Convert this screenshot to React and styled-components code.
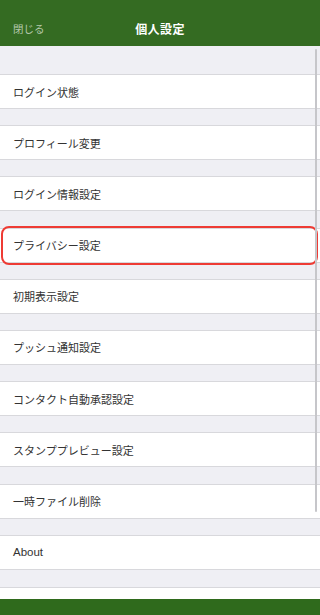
import React from 'react';
import styled, { createGlobalStyle } from 'styled-components';

const GlobalStyle = createGlobalStyle`
  html, body {
    margin: 0;
    padding: 0;
    background: #efeff4;
  }
  body {
    font-family: "Noto Sans CJK JP", "Noto Sans", sans-serif;
  }
`;

const Screen = styled.div`
  position: relative;
  width: 100%;
  height: 615px;
  display: flex;
  flex-direction: column;
  background: #efeff4;
  overflow: hidden;
`;

const Header = styled.div`
  height: 46px;
  flex-shrink: 0;
  background: #346b22;
  display: grid;
  grid-template-columns: 60px 1fr 60px;
  align-items: center;
  padding-top: 10px;
  box-sizing: border-box;
`;

const CloseLink = styled.span`
  padding-left: 13px;
  font-size: 10.5px;
  color: #b4c8ac;
`;

const Title = styled.h1`
  margin: 0;
  text-align: center;
  font-size: 12px;
  font-weight: 700;
  color: #ffffff;
  letter-spacing: 0.4px;
`;

const List = styled.div`
  flex: 1;
  display: flex;
  flex-direction: column;
  padding-top: 28px;
  gap: 16.2px;
`;

const Row = styled.div`
  position: relative;
  height: 35px;
  box-sizing: border-box;
  display: flex;
  align-items: center;
  padding-left: 13px;
  background: #ffffff;
  border-top: 1px solid #d8d8dc;
  border-bottom: 1px solid #d8d8dc;
  font-size: ${p => (p.$latin ? '11.5px' : '11px')};
  color: #333333;
  font-family: ${p => (p.$latin ? '"Liberation Sans", Arial, sans-serif' : 'inherit')};
`;

const Highlight = styled.div`
  position: absolute;
  left: 1px;
  right: 2px;
  top: -3px;
  bottom: -3px;
  border: 2px solid #ee3b34;
  border-radius: 8px;
  pointer-events: none;
`;

const Spacer = styled.div`
  height: 11px;
  margin-top: 1px;
  background: #ffffff;
  border-top: 1px solid #d8d8dc;
`;

const Footer = styled.div`
  height: 17px;
  flex-shrink: 0;
  background: #2f6a1c;
`;

const ScrollIndicator = styled.div`
  position: absolute;
  right: 3px;
  top: 49px;
  width: 2px;
  height: 463px;
  background: #c6c6ca;
  border-radius: 1px;
`;

const items = [
  { label: 'ログイン状態' },
  { label: 'プロフィール変更' },
  { label: 'ログイン情報設定' },
  { label: 'プライバシー設定', highlight: true },
  { label: '初期表示設定' },
  { label: 'プッシュ通知設定' },
  { label: 'コンタクト自動承認設定' },
  { label: 'スタンププレビュー設定' },
  { label: '一時ファイル削除' },
  { label: 'About', latin: true },
];

const App = () => (
  <>
    <GlobalStyle />
    <Screen>
      <Header>
        <CloseLink>閉じる</CloseLink>
        <Title>個人設定</Title>
        <span />
      </Header>
      <List>
        {items.map(item => (
          <Row key={item.label} $latin={item.latin}>
            {item.label}
            {item.highlight && <Highlight />}
          </Row>
        ))}
        <Spacer />
      </List>
      <Footer />
      <ScrollIndicator />
    </Screen>
  </>
);

export default App;
